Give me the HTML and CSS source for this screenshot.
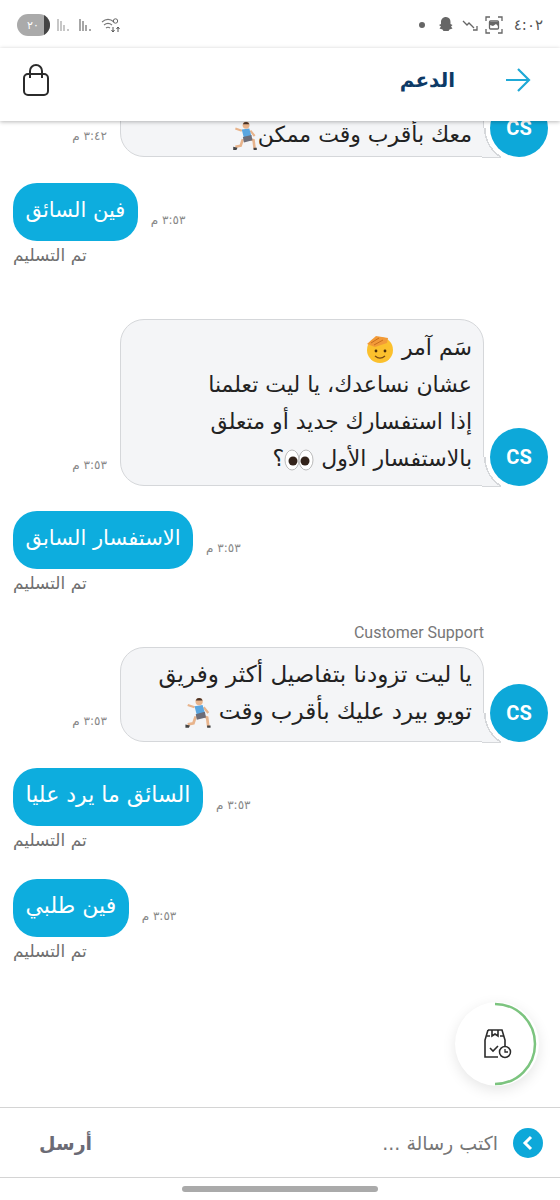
FILE: index.html
```html
<!DOCTYPE html>
<html lang="ar">
  <head>
    <meta charset="UTF-8" />
    <title>الدعم</title>
    <link rel="stylesheet" href="styles.css">
  </head>
  <body>
    <div class="phone">
      <div class="status-bar">
        <div class="status-left">
          <span class="battery"><span class="battery-num">٢٠</span><span class="battery-end"></span></span>
          <svg width="15" height="14" viewBox="0 0 15 14"><path d="M1 1v12M4 3v10M7 7v6M11 11v2" stroke="#aaa" stroke-width="1.3" fill="none"/></svg>
          <svg width="15" height="14" viewBox="0 0 15 14"><path d="M1 1v12M4 3v10M7 7v6M11 11v2" stroke="#777" stroke-width="1.3" fill="none"/></svg>
          <svg width="22" height="16" viewBox="0 0 22 16"><path d="M1 5c4-3.500 8-3.500 12 0M3 8c3-2.400 5-2.400 8 0M5 11c1.500-1.200 2.500-1.200 4 0" stroke="#777" stroke-width="1.100" fill="none"/><path d="M12 10v5M10.500 13l1.500 2 1.500-2M17 15v-5M15.500 12l1.500-2 1.500 2" stroke="#555" stroke-width="1" fill="none"/><circle cx="14.500" cy="4" r="2.200" stroke="#666" fill="none"/></svg>
        </div>
        <div class="status-right">
          <span class="dot"></span>
          <svg width="18" height="18" viewBox="0 0 17 18"><path d="M8.500 1c3 0 4.500 2.200 4.500 5v2l2 1-1.500 1.500 1.500 2-3 1-1 1.500h-5l-1-1.500-3-1 1.500-2L1.500 9l2-1V6c0-2.800 2-5 5-5z" fill="#666"/></svg>
          <svg width="18" height="12" viewBox="0 0 16 12"><path d="M1 2l4 4 2-2 5 5M15 7v4h-4" stroke="#666" stroke-width="1.300" fill="none"/></svg>
          <svg width="18" height="18" viewBox="0 0 18 18"><path d="M1 5V1h4M13 1h4v4M17 13v4h-4M5 17H1v-4" stroke="#666" stroke-width="1.300" fill="none"/><rect x="4.500" y="5" width="9" height="8" rx="1" fill="none" stroke="#666" stroke-width="1.300"/><path d="M5 6h8v4l-2-2-3 2-3-1z" fill="#666"/></svg>
          <span class="clock">٤:٠٢</span>
        </div>
      </div>

      <header class="app-bar">
        <svg width="26" height="26" viewBox="0 0 26 26"><path d="M1 13h23M13 2l11 11-11 11" stroke="#1fa9d6" stroke-width="2.200" fill="none"/></svg>
        <span class="title">الدعم</span>
        <svg width="28" height="34" viewBox="0 0 28 34"><rect x="2" y="11" width="24" height="21" rx="4" fill="none" stroke="#2b2b2b" stroke-width="2"/><path d="M8 15V8a6 6 0 0 1 12 0v7" fill="none" stroke="#2b2b2b" stroke-width="2"/></svg>
      </header>

      <main class="chat">
        <div class="row first">
          <div class="avatar">CS</div>
          <div class="bubble">معك بأقرب وقت ممكن<svg class="emoji" width="26" height="30" viewBox="0 0 24 28"><use href="#runner"/></svg></div>
          <span class="time">٣:٤٢ م</span>
        </div>

        <div class="mine one">
          <div class="mine-row">
            <div class="blue">فين السائق</div>
            <span class="time">٣:٥٣ م</span>
          </div>
          <div class="delivered">تم التسليم</div>
        </div>

        <div class="row two">
          <div class="avatar">CS</div>
          <div class="bubble">
            <div class="line">سَم آمر <svg class="emoji" width="30" height="30" viewBox="0 0 30 30"><circle cx="15" cy="16" r="13" fill="#fbc02d"/><path d="M10 22c3 2.500 7 2.500 10 0" stroke="#7a4a12" stroke-width="1.300" fill="none"/><circle cx="11" cy="17" r="1.400" fill="#4a2c0a"/><circle cx="20" cy="17" r="1.400" fill="#4a2c0a"/><path d="M2 10l9-8 12 2-1 5-12 4z" fill="#f29a38"/><path d="M6 9l8-5M9 11l9-5" stroke="#c96f1c" fill="none"/></svg></div>
            <div class="line">عشان نساعدك، يا ليت تعلمنا</div>
            <div class="line">إذا استفسارك جديد أو متعلق</div>
            <div class="line">بالاستفسار الأول <svg class="emoji" width="30" height="24" viewBox="0 0 30 24"><ellipse cx="8" cy="12" rx="7" ry="10" fill="#fff" stroke="#bbb"/><ellipse cx="22" cy="12" rx="7" ry="10" fill="#fff" stroke="#bbb"/><circle cx="9" cy="13" r="4.500" fill="#33231a"/><circle cx="21" cy="13" r="4.500" fill="#33231a"/></svg>؟</div>
          </div>
          <span class="time">٣:٥٣ م</span>
        </div>

        <div class="mine three">
          <div class="mine-row">
            <div class="blue">الاستفسار السابق</div>
            <span class="time">٣:٥٣ م</span>
          </div>
          <div class="delivered">تم التسليم</div>
        </div>

        <div class="sender">Customer Support</div>
        <div class="row four">
          <div class="avatar">CS</div>
          <div class="bubble">
            <div class="line">يا ليت تزودنا بتفاصيل أكثر وفريق</div>
            <div class="line">تويو بيرد عليك بأقرب وقت <svg class="emoji" width="28" height="32" viewBox="0 0 24 28"><use href="#runner"/></svg></div>
          </div>
          <span class="time">٣:٥٣ م</span>
        </div>

        <div class="mine five">
          <div class="mine-row">
            <div class="blue">السائق ما يرد عليا</div>
            <span class="time">٣:٥٣ م</span>
          </div>
          <div class="delivered">تم التسليم</div>
        </div>

        <div class="mine six">
          <div class="mine-row">
            <div class="blue">فين طلبي</div>
            <span class="time">٣:٥٣ م</span>
          </div>
          <div class="delivered">تم التسليم</div>
        </div>
      </main>

      <div class="fab">
        <svg class="ring" width="84" height="84" viewBox="0 0 84 84"><path d="M40 2a40 40 0 0 1 0 80" fill="none" stroke="#7cc47f" stroke-width="2.500"/></svg>
        <svg width="30" height="32" viewBox="0 0 30 32"><path d="M6 2h14l3 10v7M6 2L3 12v17h13" fill="none" stroke="#2b2b2b" stroke-width="1.600"/><path d="M10 2v6l3-2 3 2V2M5 8h3M18 8h4" fill="none" stroke="#2b2b2b" stroke-width="1.600"/><path d="M8 20l3 3 5-5" fill="none" stroke="#2b2b2b" stroke-width="1.600"/><circle cx="23" cy="24" r="5.500" fill="#fff" stroke="#2b2b2b" stroke-width="1.500"/><path d="M23 21v3h3" fill="none" stroke="#2b2b2b" stroke-width="1.300"/></svg>
      </div>

      <footer class="composer">
        <span class="expand"><svg width="14" height="16" viewBox="0 0 14 16"><path d="M10 2L4 8l6 6" fill="none" stroke="#fff" stroke-width="3"/></svg></span>
        <span class="placeholder">اكتب رسالة ...</span>
        <span class="send">أرسل</span>
      </footer>
      <div class="nav-bar"><span class="home-pill"></span></div>
    </div>

    <svg class="defs" width="0" height="0">
      <symbol id="runner" viewBox="0 0 24 28">
        <path d="M14 16l6 2 1 8M10 17l-2 6-5 1" stroke="#e8b48c" stroke-width="2.400" fill="none"/>
        <path d="M9 9l-6-2M17 9l4 5" stroke="#e8b48c" stroke-width="2" fill="none"/>
        <path d="M9 8l7-1 2 7-7 2z" fill="#5aa6e0"/>
        <path d="M10 15l8-2 1 5-8 2z" fill="#6d6d78"/>
        <circle cx="13" cy="4" r="3.200" fill="#e8b48c"/>
        <path d="M10 3a3.200 3.200 0 0 1 6 0z" fill="#4a3326"/>
        <path d="M1 24l4 1-1 2H1zM20 25h3v2h-3z" fill="#444"/>
      </symbol>
    </svg>
  </body>
</html>
```

FILE: styles.css
```css
* {
  box-sizing: border-box;
}
html,
body {
  margin: 0;
  background: #fff;
}
.phone {
  position: relative;
  width: 560px;
  height: 1200px;
  overflow: hidden;
  display: flex;
  flex-direction: column;
  font-family: "DejaVu Sans", "Noto Sans", sans-serif;
}
.defs {
  position: absolute;
}
.status-bar {
  height: 48px;
  flex: none;
  padding: 14px 17px 0;
  display: flex;
  justify-content: space-between;
  align-items: flex-start;
}
.status-left,
.status-right {
  display: flex;
  align-items: center;
  gap: 7px;
  height: 22px;
}
.battery {
  width: 33px;
  height: 22px;
  border-radius: 11px;
  background: #aaa;
  overflow: hidden;
  display: flex;
  justify-content: space-between;
  align-items: center;
}
.battery-num {
  color: #fff;
  font-size: 11px;
  padding-left: 10px;
}
.battery-end {
  width: 6px;
  height: 22px;
  background: #444;
}
.status-right {
  gap: 6px;
}
.dot {
  width: 6px;
  height: 6px;
  border-radius: 50%;
  background: #666;
  margin-right: 6px;
}
.clock {
  color: #555;
  font-size: 15px;
  margin-left: 5px;
}
.app-bar {
  height: 73px;
  flex: none;
  background: #fff;
  display: flex;
  align-items: center;
  padding: 0 29px 9px 22px;
  direction: rtl;
  box-shadow: 0 1px 4px rgba(0, 0, 0, 0.28);
  position: relative;
  z-index: 2;
}
.title {
  flex: 1;
  margin-right: 50px;
  color: #0d3a66;
  font-size: 20px;
  font-weight: bold;
}
.chat {
  flex: 1;
  direction: rtl;
  padding-right: 12px;
}
.row {
  display: flex;
  align-items: flex-end;
  position: relative;
}
.avatar {
  width: 58px;
  height: 58px;
  flex: none;
  border-radius: 50%;
  background: #0da8d9;
  color: #fff;
  font-family: Roboto, sans-serif;
  font-weight: bold;
  font-size: 20px;
  display: flex;
  align-items: center;
  justify-content: center;
  position: relative;
  z-index: 1;
}
.bubble {
  position: relative;
  width: 364px;
  flex: none;
  margin-right: 6px;
  padding: 9px 11px 8px;
  background: #f4f5f7;
  border: 1.5px solid #d5d7da;
  border-radius: 24px 24px 0 24px;
  color: #222;
  font-size: 22px;
  line-height: 37px;
}
/* tail that wraps round the avatar, circle centred on the avatar */
.bubble::after {
  content: "";
  position: absolute;
  right: -18px;
  bottom: -1.5px;
  width: 19px;
  height: 29px;
  border-bottom: 1.5px solid #d5d7da;
  background: radial-gradient(circle at 37px 0, #fff 33.5px, #d5d7da 33.5px, #d5d7da 35px, #f4f5f7 35px);
}
.row.first {
  height: 36px;
}
.row.first .bubble {
  height: 60px;
  padding-top: 18px;
  white-space: nowrap;
}
.line {
  white-space: nowrap;
}
.emoji {
  vertical-align: middle;
}
.time {
  color: #888;
  font-size: 12px;
  margin: 0 13px 14px 0;
  white-space: nowrap;
}
.mine {
  direction: ltr;
  padding-left: 13px;
}
.mine-row {
  display: flex;
  align-items: flex-end;
}
.mine-row .time {
  margin: 0 0 14px 13px;
}
.blue {
  height: 58px;
  padding: 0 12.5px;
  background: #0dadde;
  color: #fff;
  border-radius: 24px;
  font-size: 21px;
  line-height: 54px;
  direction: rtl;
  white-space: nowrap;
}
.delivered {
  margin-top: 2px;
  color: #6f6f6f;
  font-size: 17px;
  direction: rtl;
  text-align: left;
  line-height: 24px;
}
.one {
  margin-top: 26px;
}
.two {
  margin-top: 52px;
}
.three {
  margin-top: 25px;
}
.sender {
  margin: 28px 64px 0 0;
  color: #777;
  font-family: Roboto, sans-serif;
  font-size: 16px;
  line-height: 20px;
  direction: ltr;
  text-align: right;
}
.four {
  margin-top: 4px;
}
.four .bubble {
  font-size: 23px;
  padding: 8px 11px;
  height: 95px;
}
.five {
  margin-top: 26px;
}
.five .blue,
.six .blue {
  font-size: 22px;
}
.six {
  margin-top: 27px;
}
.fab {
  position: absolute;
  left: 455px;
  top: 1002px;
  width: 84px;
  height: 84px;
  border-radius: 50%;
  background: #fff;
  box-shadow: 0 4px 14px rgba(0, 0, 0, 0.1);
  display: flex;
  align-items: center;
  justify-content: center;
}
.ring {
  position: absolute;
  left: 0;
  top: 0;
}
.composer {
  position: absolute;
  left: 0;
  right: 0;
  top: 1107px;
  height: 71px;
  border-top: 1px solid #d4d4d4;
  border-bottom: 1px solid #d4d4d4;
  display: flex;
  align-items: center;
  direction: rtl;
  padding: 0 17px 0 39px;
  background: #fff;
}
.expand {
  width: 30px;
  height: 30px;
  border-radius: 50%;
  background: #0da8d9;
  display: flex;
  align-items: center;
  justify-content: center;
  margin-left: 15px;
}
.placeholder {
  flex: 1;
  color: #777;
  font-size: 19px;
}
.send {
  color: #6b6b75;
  font-size: 19px;
  font-weight: bold;
}
.nav-bar {
  position: absolute;
  left: 0;
  right: 0;
  top: 1178px;
  height: 22px;
  display: flex;
  justify-content: center;
  padding-top: 8px;
}
.home-pill {
  width: 196px;
  height: 6px;
  border-radius: 3px;
  background: #aaa;
}
```
